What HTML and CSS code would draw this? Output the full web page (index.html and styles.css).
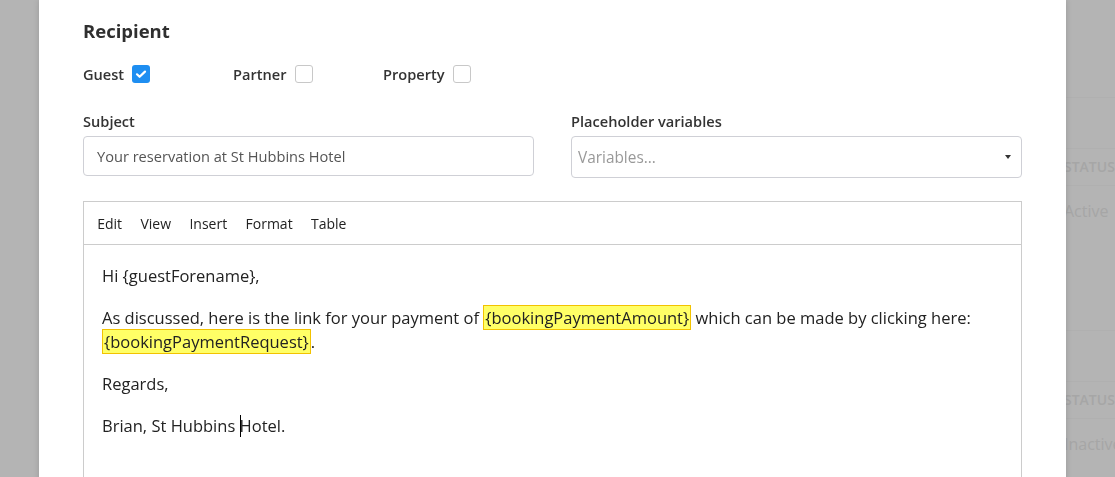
FILE: index.html
```html
<!DOCTYPE html>
<html lang="en">
<head>
    <meta charset="UTF-8">
    <meta name="viewport" content="width=device-width, initial-scale=1.0">
    <title>Edit template</title>
    <link rel="stylesheet" href="styles.css">
</head>
<body>
    <!-- Page behind the modal -->
    <div id="page">
        <div class="bg-table">
            <div class="bg-row"></div>
            <div class="bg-row bg-head">STATUS</div>
            <div class="bg-row bg-cell">Active</div>
        </div>
        <div class="bg-table second">
            <div class="bg-row"></div>
            <div class="bg-row bg-head">STATUS</div>
            <div class="bg-row bg-cell">Inactive</div>
        </div>
    </div>

    <div id="modal">
        <h2 class="section-title">Recipient</h2>
        <div id="recipients">
            <label class="recipient">Guest <span class="check checked">
                <svg viewBox="0 0 18 18" width="18" height="18"><path d="M5 9.3l2.6 2.5L13 6.6" fill="none" stroke="#fff" stroke-width="2.2" stroke-linecap="round" stroke-linejoin="round"/></svg>
            </span></label>
            <label class="recipient">Partner <span class="check"></span></label>
            <label class="recipient">Property <span class="check"></span></label>
        </div>

        <div class="form-row">
            <div class="field">
                <label class="field-label">Subject</label>
                <div class="input">Your reservation at St Hubbins Hotel</div>
            </div>
            <div class="field">
                <label class="field-label">Placeholder variables</label>
                <div class="input select">
                    <span class="placeholder">Variables...</span>
                    <span class="caret"></span>
                </div>
            </div>
        </div>

        <div id="editor">
            <div class="menubar">
                <span class="menu-item">Edit</span>
                <span class="menu-item">View</span>
                <span class="menu-item">Insert</span>
                <span class="menu-item">Format</span>
                <span class="menu-item">Table</span>
            </div>
            <div class="editor-body">
                <p>Hi {guestForename},</p>
                <p>As discussed, here is the link for your payment of <span class="var">{bookingPaymentAmount}</span> which can be made by clicking here: <span class="var">{bookingPaymentRequest}</span>.</p>
                <p>Regards,</p>
                <p>Brian, St Hubbins <span class="cursor"></span>Hotel.</p>
            </div>
        </div>
    </div>
</body>
</html>
```

FILE: styles.css
```css
body {
    margin: 0;
    height: 477px;
    overflow: hidden;
    background-color: #b4b4b4;
    font-family: "Open Sans", "Noto Sans", sans-serif;
}

#page {
    padding-top: 97px;
    padding-left: 1064px;
}

.bg-table {
    color: #a6a6a6;
}

.bg-table.second {
    margin-top: 94px;
}

.bg-row {
    border-top: 1px solid #b0b0b0;
    font-size: 15px;
}

.bg-row:first-child {
    height: 50px;
}

.bg-head {
    height: 36px;
    line-height: 36px;
    font-weight: 600;
    font-size: 14px;
}

.bg-cell {
    height: 50px;
    line-height: 50px;
    font-size: 16px;
}

#modal {
    position: fixed;
    top: 0;
    left: 39px;
    width: 1027px;
    height: 520px;
    box-sizing: border-box;
    padding: 18px 44px 0;
    background: #fff;
    box-shadow: 0 0 6px rgba(0,0,0,0.15);
    font-family: "Open Sans", "Noto Sans", sans-serif;
    color: #333;
}

.section-title {
    margin: 0;
    font-size: 18.5px;
    font-weight: 700;
    line-height: 26px;
    color: #2f2f2f;
}

#recipients {
    display: flex;
    margin-top: 20px;
    height: 20px;
    align-items: center;
}

.recipient {
    display: flex;
    align-items: center;
    gap: 8px;
    width: 150px;
    font-size: 14.6px;
    font-weight: 600;
    color: #333;
}

.check {
    display: inline-block;
    width: 16px;
    height: 16px;
    border: 1px solid #c8c8c8;
    border-radius: 3px;
}

.check.checked {
    width: 18px;
    height: 18px;
    border: none;
    background: #1e8ef1;
}

.check svg {
    display: block;
}

.form-row {
    display: flex;
    gap: 37px;
    margin-top: 27px;
}

.field {
    width: 451px;
}

.field-label {
    display: block;
    font-size: 14.6px;
    font-weight: 600;
    line-height: 20px;
    margin-bottom: 5px;
    color: #333;
}

.input {
    height: 40px;
    box-sizing: border-box;
    border: 1px solid #cfd0d6;
    border-radius: 4px;
    padding: 0 13px;
    display: flex;
    align-items: center;
    font-size: 14.6px;
    color: #555;
}

.select {
    height: 42px;
    padding: 0 10px 0 6px;
    justify-content: space-between;
}

.placeholder {
    font-size: 15.4px;
    color: #999;
}

.caret {
    width: 0;
    height: 0;
    border-left: 3.5px solid transparent;
    border-right: 3.5px solid transparent;
    border-top: 4px solid #333;
}

#editor {
    margin-top: 23px;
    height: 320px;
    border: 1px solid #ccc;
    color: #222;
}

.menubar {
    height: 42px;
    display: flex;
    align-items: center;
    padding-left: 4px;
    border-bottom: 1px solid #ccc;
}

.menu-item {
    padding: 0 9.2px;
    font-size: 14px;
    color: #222;
}

.editor-body {
    padding: 7px 8px 7px 18px;
    font-size: 16.5px;
    line-height: 24px;
}

.editor-body p {
    margin: 12px 0 18px;
}

.var {
    background: #ffff66;
    border: 1px solid #f2c200;
    padding: 0 1px;
}

.cursor {
    display: inline-block;
    width: 1px;
    height: 22px;
    margin-right: -1px;
    vertical-align: -5px;
    background: #000;
}
```
